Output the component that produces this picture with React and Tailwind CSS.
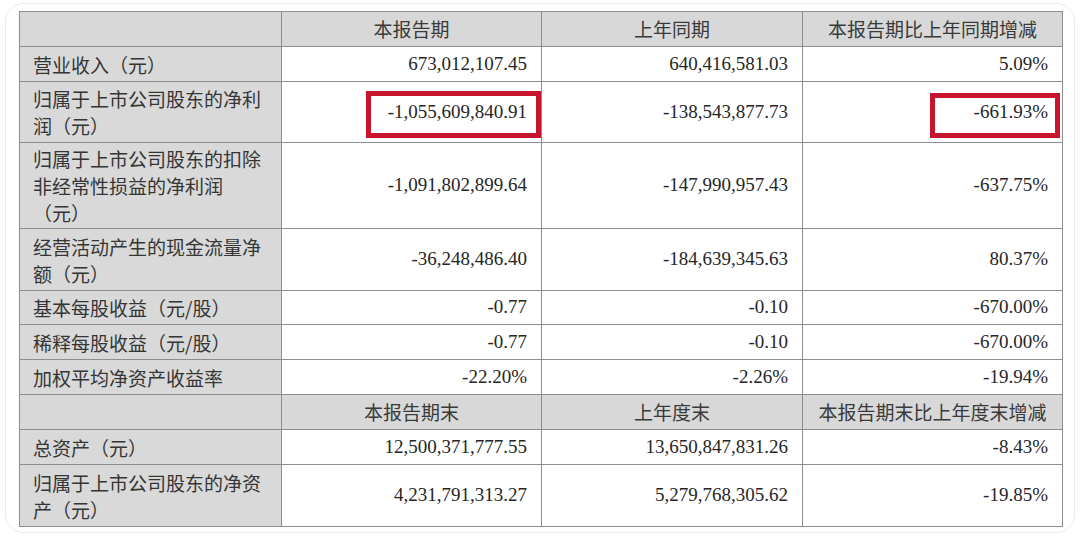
const top = [
  { label: ["营业收入（元）"], a: "673,012,107.45", b: "640,416,581.03", c: "5.09%", h: "h-[35px]" },
  { label: ["归属于上市公司股东的净利", "润（元）"], a: "-1,055,609,840.91", b: "-138,543,877.73", c: "-661.93%", h: "h-[61px]", mark: true },
  { label: ["归属于上市公司股东的扣除", "非经常性损益的净利润", "（元）"], a: "-1,091,802,899.64", b: "-147,990,957.43", c: "-637.75%", h: "h-[86px]" },
  { label: ["经营活动产生的现金流量净", "额（元）"], a: "-36,248,486.40", b: "-184,639,345.63", c: "80.37%", h: "h-[62px]" },
  { label: ["基本每股收益（元/股）"], a: "-0.77", b: "-0.10", c: "-670.00%", h: "h-[34px]" },
  { label: ["稀释每股收益（元/股）"], a: "-0.77", b: "-0.10", c: "-670.00%", h: "h-[35px]" },
  { label: ["加权平均净资产收益率"], a: "-22.20%", b: "-2.26%", c: "-19.94%", h: "h-[35px]" },
];

const bottom = [
  { label: ["总资产（元）"], a: "12,500,371,777.55", b: "13,650,847,831.26", c: "-8.43%", h: "h-[35px]" },
  { label: ["归属于上市公司股东的净资", "产（元）"], a: "4,231,791,313.27", b: "5,279,768,305.62", c: "-19.85%", h: "h-[62px]" },
];

const cn = "font-['Noto_Sans_CJK_SC',sans-serif]";
const num = "font-['Liberation_Serif','Times_New_Roman',serif]";

function Head({ cols }) {
  return (
    <tr className="h-[35px] bg-[#d8d8d8]">
      <td className="border border-[#8d8d8d]"></td>
      {cols.map((c) => (
        <td key={c} className={"border border-[#8d8d8d] text-center text-[19px] text-[#3a3a3a] " + cn}>{c}</td>
      ))}
    </tr>
  );
}

function Row({ r }) {
  return (
    <tr className={r.h}>
      <td className={"border border-[#8d8d8d] bg-[#d9d9d9] pl-[13px] pr-[10px] text-[19px] leading-[27px] text-[#353535] " + cn}>
        {r.label.map((l, i) => (
          <div key={i}>{l}</div>
        ))}
      </td>
      <td className={"relative border border-[#8d8d8d] pr-[14px] text-right text-[19px] text-[#262626] " + num}>
        {r.mark && <div className="absolute left-[84px] right-0 top-[9px] bottom-[4px] border-[5px] border-[#c8142c]"></div>}
        <span className="relative">{r.a}</span>
      </td>
      <td className={"border border-[#8d8d8d] pr-[14px] text-right text-[19px] text-[#262626] " + num}>{r.b}</td>
      <td className={"relative border border-[#8d8d8d] pr-[14px] text-right text-[19px] text-[#262626] " + num}>
        {r.mark && <div className="absolute left-[127px] right-[2px] top-[11px] bottom-[4px] border-[5px] border-[#c8142c]"></div>}
        <span className="relative">{r.c}</span>
      </td>
    </tr>
  );
}

export default function App() {
  return (
    <div className="w-[1080px] h-[548px] bg-white pt-[3px] pl-[5px]">
      <div className="w-[1070px] h-[530px] rounded-[18px] border border-[#ececec] bg-white pt-[7px] pl-[13px]">
        <table className="w-[1043px] table-fixed border-collapse">
          <colgroup>
            <col className="w-[262px]" />
            <col className="w-[260px]" />
            <col className="w-[261px]" />
            <col className="w-[260px]" />
          </colgroup>
          <tbody>
            <Head cols={["本报告期", "上年同期", "本报告期比上年同期增减"]} />
            {top.map((r, i) => (
              <Row key={i} r={r} />
            ))}
            <Head cols={["本报告期末", "上年度末", "本报告期末比上年度末增减"]} />
            {bottom.map((r, i) => (
              <Row key={i} r={r} />
            ))}
          </tbody>
        </table>
      </div>
    </div>
  );
}
